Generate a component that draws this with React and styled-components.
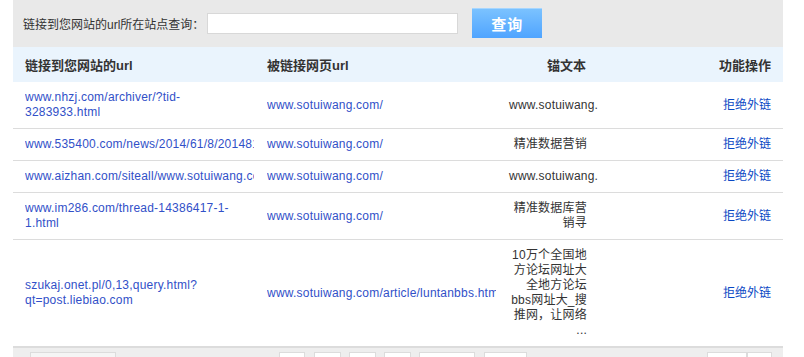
import React from 'react';
import styled, {createGlobalStyle} from 'styled-components'

const GlobalStyle = createGlobalStyle`
  html, body {
    margin: 0;
    padding: 0;
    overflow: hidden;
    background: #fff;
    font-family: "Liberation Sans", Arial, "Noto Sans CJK SC", sans-serif;
    font-size: 12px;
    color: #333;
  }
`
const Page = styled.div`
  width: 770px;
  margin-left: 13px;
`
const SearchBar = styled.div`
  height: 47px;
  background: #e9e9e9;
  display: flex;
  align-items: center;
  padding-left: 10px;
  box-sizing: border-box;
`
const SearchLabel = styled.label`
  font-size: 12px;
  color: #333;
  margin-right: 3px;
`
const SearchInput = styled.input`
  width: 251px;
  height: 21px;
  box-sizing: border-box;
  border: 1px solid #d8d8d8;
  background: #fff;
  outline: none;
  padding: 0 4px;
`
const SearchButton = styled.button`
  margin-left: 14px;
  width: 70px;
  height: 30px;
  border: none;
  border-top: 1px solid #a6d6ff;
  background: linear-gradient(#7bc2ff, #4fa4ff);
  color: #fff;
  font-family: "Noto Sans CJK SC", sans-serif;
  font-weight: bold;
  font-size: 15px;
  letter-spacing: 1px;
  padding: 0;
  margin-top: -1px;
`
const Table = styled.table`
  width: 770px;
  table-layout: fixed;
  border-collapse: collapse;
`
const HeadRow = styled.tr`
  background: #eaf4fd;
  height: 35px;
`
const HeadCell = styled.th`
  font-size: 13px;
  font-weight: bold;
  color: #333;
  padding: 0 12px;
  text-align: ${({$align}) => $align || 'left'};
  vertical-align: middle;
`
const Row = styled.tr`
  border-bottom: 1px solid #dcdcdc;
`
const Cell = styled.td`
  padding: 8px 12px;
  line-height: 15px;
  letter-spacing: 0.22px;
  vertical-align: middle;
  overflow: hidden;
  text-align: ${({$align}) => $align || 'left'};
  white-space: ${({$nowrap}) => $nowrap ? 'nowrap' : 'normal'};
`
const Link = styled.a`
  display: block;
  margin-right: -11px;
  overflow: hidden;
  color: #3150c8;
  text-decoration: none;
`
const ActionLink = styled.a`
  color: #0a48c4;
  text-decoration: none;
  letter-spacing: 0;
`
const Anchor = styled.div`
  width: 78px;
  margin-left: auto;
  text-align: right;
  color: #333;
`
const Pager = styled.div`
  height: 30px;
  background: #eeeeee;
  border-top: 1px solid #dcdcdc;
  display: flex;
  align-items: flex-start;
  padding: 4px 11px 0 17px;
`
const PageBox = styled.span`
  display: block;
  width: ${({$w}) => $w}px;
  height: 22px;
  box-sizing: border-box;
  border: 1px solid #dcdcdc;
  background: ${({$soft}) => $soft ? '#f5f5f5' : '#fff'};
  margin-left: ${({$gap}) => $gap || 0}px;
`
const PageGroup = styled.div`
  display: flex;
  margin-left: ${({$push}) => $push ? 'auto' : '163px'};
`

const rows = [
  {source: ['www.nhzj.com/archiver/?tid-', '3283933.html'], target: 'www.sotuiwang.com/', anchor: ['www.sotuiwang.com']},
  {source: ['www.535400.com/news/2014/61/8/2014816.html'], nowrap: true, target: 'www.sotuiwang.com/', anchor: ['精准数据营销']},
  {source: ['www.aizhan.com/siteall/www.sotuiwang.com/'], nowrap: true, target: 'www.sotuiwang.com/', anchor: ['www.sotuiwang.com']},
  {source: ['www.im286.com/thread-14386417-1-', '1.html'], target: 'www.sotuiwang.com/', anchor: ['精准数据库营销寻']},
  {source: ['szukaj.onet.pl/0,13,query.html?', 'qt=post.liebiao.com'], target: 'www.sotuiwang.com/article/luntanbbs.html', anchor: ['10万个全国地方论坛网址大全地方论坛bbs网址大_搜推网，让网络', '...']},
]

const withBreaks = (parts) => parts.map((part, j) => (
  <React.Fragment key={j}>{j > 0 && <wbr />}{part}</React.Fragment>
))

const App = () => {
  return (
    <Page>
      <GlobalStyle />
      <SearchBar>
        <SearchLabel>链接到您网站的url所在站点查询：</SearchLabel>
        <SearchInput type="text" />
        <SearchButton>查询</SearchButton>
      </SearchBar>
      <Table>
        <colgroup>
          <col style={{width: 242}} />
          <col style={{width: 242}} />
          <col style={{width: 101}} />
          <col style={{width: 185}} />
        </colgroup>
        <thead>
          <HeadRow>
            <HeadCell>链接到您网站的url</HeadCell>
            <HeadCell>被链接网页url</HeadCell>
            <HeadCell $align="right">锚文本</HeadCell>
            <HeadCell $align="right">功能操作</HeadCell>
          </HeadRow>
        </thead>
        <tbody>
          {rows.map((row, i) => (
            <Row key={i}>
              <Cell $nowrap={row.nowrap}>
                <Link href="#">{withBreaks(row.source)}</Link>
              </Cell>
              <Cell $nowrap><Link href="#">{row.target}</Link></Cell>
              <Cell><Anchor>{withBreaks(row.anchor)}</Anchor></Cell>
              <Cell $align="right"><ActionLink href="#">拒绝外链</ActionLink></Cell>
            </Row>
          ))}
        </tbody>
      </Table>
      <Pager>
        <PageBox $w={86} $soft />
        <PageGroup>
          <PageBox $w={26} />
          <PageBox $w={27} $gap={9} />
          <PageBox $w={27} $gap={8} />
          <PageBox $w={27} $gap={8} />
          <PageBox $w={56} $gap={8} />
          <PageBox $w={43} $gap={9} />
        </PageGroup>
        <PageGroup $push>
          <PageBox $w={40} />
          <PageBox $w={25} />
        </PageGroup>
      </Pager>
    </Page>
  )
}

export default App
